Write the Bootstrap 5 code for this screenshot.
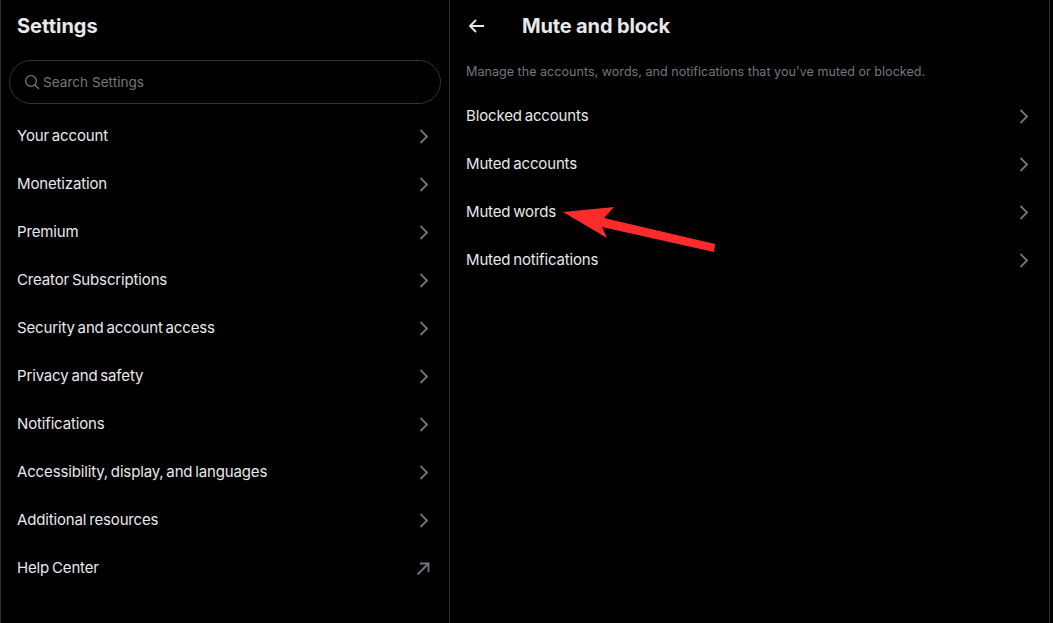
<!DOCTYPE html>
<html lang="en"><head><meta charset="utf-8"><title>Mute and block</title>
<link rel="stylesheet" href="https://cdn.jsdelivr.net/npm/bootstrap@5.3.0/dist/css/bootstrap.min.css">
<style>
html,body{height:100%;background:#000;overflow:hidden}
body{font-family:Inter,"Liberation Sans",sans-serif;color:#e7e9ea;font-size:15px}
.shell{height:623px;width:1050px;border-left:1px solid #2f3336;border-right:1px solid #2f3336;position:relative}
.side{width:449px;flex:none;border-right:1px solid #2f3336}
.main{flex:1 1 auto;min-width:0}
.head{height:53px;padding:0 16px;font-size:20px;font-weight:700;line-height:53px}
.search{margin:7px 8px 8px 8px;height:44px;border:1px solid #2f3336;border-radius:22px;padding:0 14px;color:#71767b;gap:3px;font-size:13.6px}
.rowitem{height:48px;padding:0 16px;color:#e7e9ea;text-decoration:none;letter-spacing:-.15px;word-spacing:-1.2px}
.rowitem svg{width:19px;height:19px;fill:none;stroke:#71767b;stroke-width:1.8}
.headtitle{font-size:20px;font-weight:700;margin-left:35px;letter-spacing:-.15px}
.desc{font-size:12.6px;color:#71767b;padding:12px 16px 0;height:39px;line-height:13px}
.back{width:20px;height:20px;fill:none;stroke:#e7e9ea;stroke-width:1.8}
.mainhead{height:53px;padding-left:17px;padding-bottom:1px}
.pointer{position:absolute;left:-1px;top:0;pointer-events:none}
</style></head>
<body>
<div class="shell d-flex">
<div class="side d-flex flex-column">
 <div class="head">Settings</div>
 <div class="search d-flex align-items-center">
  <svg width="16" height="16" viewBox="0 0 16 16" fill="none" stroke="#71767b" stroke-width="1.3"><circle cx="7" cy="7" r="5.4"/><path d="M11 11l4 4"/></svg>
  <span>Search Settings</span>
 </div>
 <nav class="d-flex flex-column">
  <a class="rowitem d-flex align-items-center justify-content-between" href="#">Your account<svg viewBox="0 0 19 19"><path d="M6.5 3l6.5 6.5-6.5 6.5"/></svg></a>
  <a class="rowitem d-flex align-items-center justify-content-between" href="#">Monetization<svg viewBox="0 0 19 19"><path d="M6.5 3l6.5 6.5-6.5 6.5"/></svg></a>
  <a class="rowitem d-flex align-items-center justify-content-between" href="#">Premium<svg viewBox="0 0 19 19"><path d="M6.5 3l6.5 6.5-6.5 6.5"/></svg></a>
  <a class="rowitem d-flex align-items-center justify-content-between" href="#">Creator Subscriptions<svg viewBox="0 0 19 19"><path d="M6.5 3l6.5 6.5-6.5 6.5"/></svg></a>
  <a class="rowitem d-flex align-items-center justify-content-between" href="#">Security and account access<svg viewBox="0 0 19 19"><path d="M6.5 3l6.5 6.5-6.5 6.5"/></svg></a>
  <a class="rowitem d-flex align-items-center justify-content-between" href="#">Privacy and safety<svg viewBox="0 0 19 19"><path d="M6.5 3l6.5 6.5-6.5 6.5"/></svg></a>
  <a class="rowitem d-flex align-items-center justify-content-between" href="#">Notifications<svg viewBox="0 0 19 19"><path d="M6.5 3l6.5 6.5-6.5 6.5"/></svg></a>
  <a class="rowitem d-flex align-items-center justify-content-between" href="#">Accessibility, display, and languages<svg viewBox="0 0 19 19"><path d="M6.5 3l6.5 6.5-6.5 6.5"/></svg></a>
  <a class="rowitem d-flex align-items-center justify-content-between" href="#">Additional resources<svg viewBox="0 0 19 19"><path d="M6.5 3l6.5 6.5-6.5 6.5"/></svg></a>
  <a class="rowitem d-flex align-items-center justify-content-between" href="#">Help Center<svg viewBox="0 0 19 19"><path d="M3.5 15.5l11-11M6 4.5h8.5V13"/></svg></a>
 </nav>
</div>
<div class="main d-flex flex-column">
 <div class="mainhead d-flex align-items-center">
  <svg class="back" viewBox="0 0 20 20"><path d="M17 10H3.5M9 4l-6 6 6 6"/></svg>
  <span class="headtitle">Mute and block</span>
 </div>
 <div class="desc">Manage the accounts, words, and notifications that you've muted or blocked.</div>
 <nav class="d-flex flex-column">
  <a class="rowitem d-flex align-items-center justify-content-between" href="#">Blocked accounts<svg viewBox="0 0 19 19"><path d="M6.5 3l6.5 6.5-6.5 6.5"/></svg></a>
  <a class="rowitem d-flex align-items-center justify-content-between" href="#">Muted accounts<svg viewBox="0 0 19 19"><path d="M6.5 3l6.5 6.5-6.5 6.5"/></svg></a>
  <a class="rowitem d-flex align-items-center justify-content-between" href="#">Muted words<svg viewBox="0 0 19 19"><path d="M6.5 3l6.5 6.5-6.5 6.5"/></svg></a>
  <a class="rowitem d-flex align-items-center justify-content-between" href="#">Muted notifications<svg viewBox="0 0 19 19"><path d="M6.5 3l6.5 6.5-6.5 6.5"/></svg></a>
 </nav>
</div>
<svg class="pointer" width="1053" height="623" viewBox="0 0 1053 623"><polygon fill="#fe2b2b" points="563,212 614,207 604,218 715,244 714,252 602,227 607,238"/></svg>
</div>
</body></html>
